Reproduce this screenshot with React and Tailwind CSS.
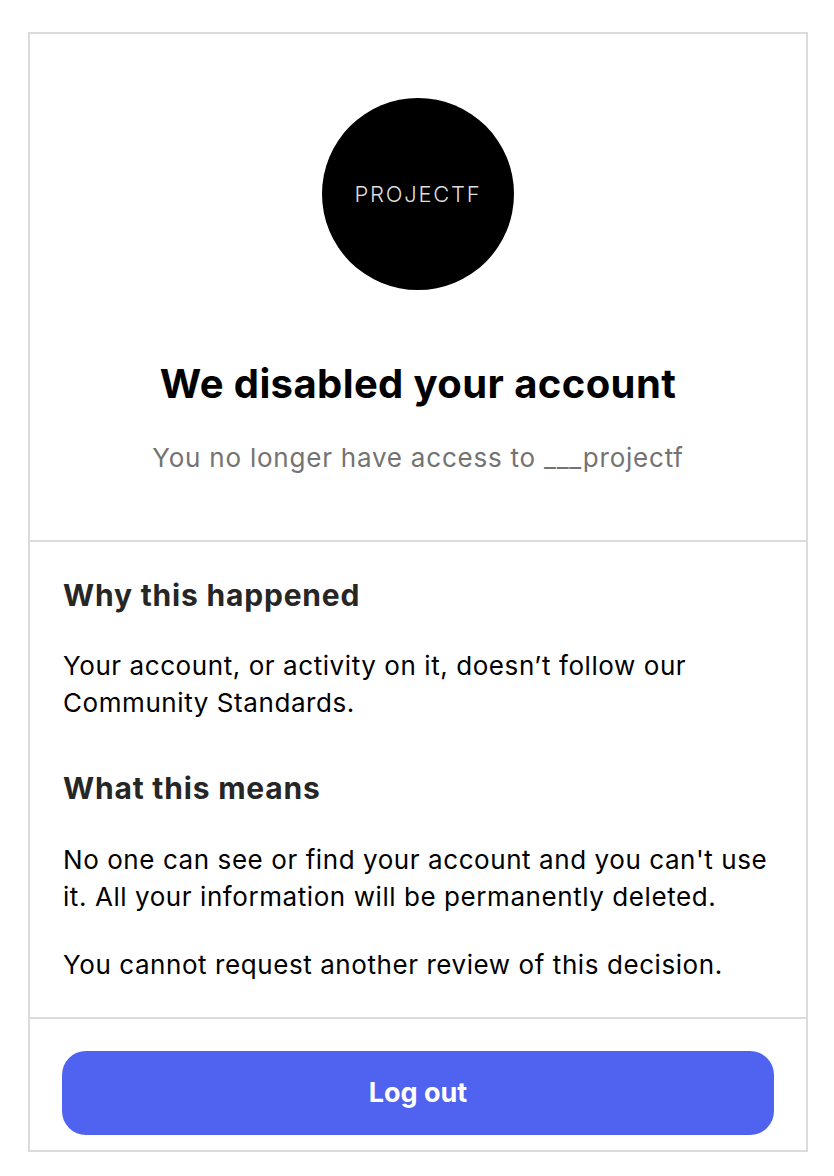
export default function App() {
  return (
    <div className="min-h-screen bg-white pt-[32px]" style={{ fontFamily: 'Inter, "Noto Sans", sans-serif' }}>
      <div className="ml-[28px] w-[780px] border-2 border-[#dbdbdb]">
        <div className="flex flex-col items-center pt-[64px] pb-[66px]">
          <div className="flex h-[192px] w-[192px] items-center justify-center rounded-full bg-black">
            <span className="text-[22px] font-light tracking-[0.08em] text-[#dedede]">PROJECTF</span>
          </div>
          <h1 className="mt-[70px] text-[40px] font-bold leading-[48px] tracking-[0.01em] text-black">
            We disabled your account
          </h1>
          <p className="mt-[34px] text-[26px] leading-[32px] tracking-[0.03em] text-[#737373]">
            You no longer have access to ___projectf
          </p>
        </div>
        <div className="border-t-2 border-[#dbdbdb] px-[33px] pt-[34px] pb-[34px]">
          <h2 className="text-[30px] font-bold leading-[38px] tracking-[0.027em] text-[#262626]">Why this happened</h2>
          <p className="mt-[33px] text-[26px] leading-[37px] tracking-[0.022em] text-black">
            Your account, or activity on it, doesn’t follow our
            <br />
            Community Standards.
          </p>
          <h2 className="mt-[48px] text-[30px] font-bold leading-[38px] tracking-[0.027em] text-[#262626]">What this means</h2>
          <p className="mt-[34px] text-[26px] leading-[37px] tracking-[0.022em] text-black">
            No one can see or find your account and you can't use it. All your information will be permanently deleted.
          </p>
          <p className="mt-[31px] text-[26px] leading-[37px] tracking-[0.022em] text-black">
            You cannot request another review of this decision.
          </p>
        </div>
        <div className="border-t-2 border-[#dbdbdb] px-[32px] pt-[32px] pb-[15px]">
          <button className="flex h-[84px] w-full items-center justify-center rounded-[24px] bg-[#5062f0] text-[27px] font-bold text-white">
            Log out
          </button>
        </div>
      </div>
    </div>
  );
}
